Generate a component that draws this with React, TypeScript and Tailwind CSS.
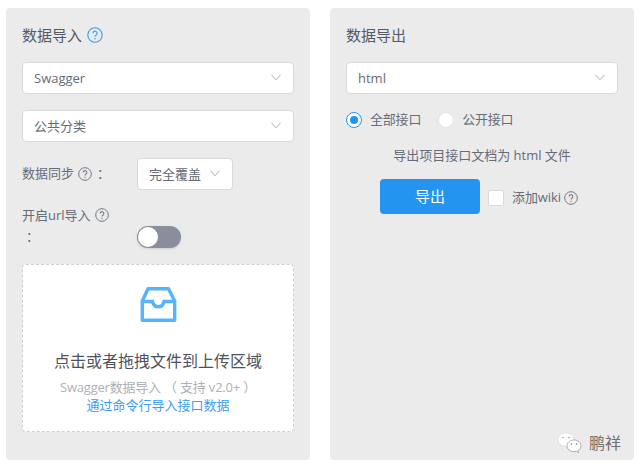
import React from 'react';

const FONT = "font-['Open_Sans','Noto_Sans_CJK_SC',sans-serif]";

const Chevron = () => (
  <svg width="10" height="7" viewBox="0 0 10 7" fill="none" className="shrink-0 mb-[2px]">
    <path d="M.5.8l4.500 5 4.500-5" stroke="#a9adb5" strokeWidth="1" />
  </svg>
);

const Help = ({ size = 14, color = '#6f7584' }: { size?: number; color?: string }) => (
  <svg width={size} height={size} viewBox="0 0 16 16" fill="none" className="shrink-0">
    <circle cx="8" cy="8" r="7.2" stroke={color} strokeWidth="1.1" />
    <path d="M5.900 6.300a2.100 2.100 0 1 1 3.300 1.700c-.8.500-1.200.9-1.200 1.800" stroke={color} strokeWidth="1.200" />
    <circle cx="8" cy="11.800" r=".8" fill={color} />
  </svg>
);

const Select = ({ label, className }: { label: string; className: string }) => (
  <div className={`h-8 bg-white border border-[#d9d9d9] rounded flex items-center justify-between pl-[11px] pr-[12px] text-[13px] text-[#666b78] ${className}`}>
    <span className="pt-[2px]">{label}</span>
    <Chevron />
  </div>
);

const Radio = ({ label, checked }: { label: string; checked?: boolean }) => (
  <div className="flex items-center gap-2 text-[13px] text-[#666b78]">
    <span className={`w-4 h-4 rounded-full bg-white border flex items-center justify-center ${checked ? 'border-[#2395f1]' : 'border-[#e4e4e4]'}`}>
      {checked && <span className="w-2 h-2 rounded-full bg-[#2395f1]" />}
    </span>
    <span className="tracking-[-0.2px]">{label}</span>
  </div>
);

const Inbox = () => (
  <svg width="37" height="37" viewBox="0 0 37 37" fill="none">
    <path d="M8 2.700h20.500L34.700 15v19.300H2.300V15z" stroke="#55b4ff" strokeWidth="3.400" strokeLinejoin="round" />
    <path d="M3 15.500h9.500c.8 3.500 3 5.300 5.800 5.300s5-1.800 5.800-5.300H34" stroke="#55b4ff" strokeWidth="3.400" />
  </svg>
);

const App: React.FC = () => {
  return (
    <div className={`relative w-[641px] h-[471px] bg-white flex gap-5 pl-[6px] pt-2 overflow-hidden ${FONT}`}>
      <div className="w-[304px] h-[452px] bg-[#ebebeb] rounded px-4 flex flex-col">
        <div className="flex items-center gap-[5px] mt-[16px] h-[22px] text-[15px] text-[#555a66]">
          <span>数据导入</span>
          <Help size={16} color="#3d9cf0" />
        </div>
        <Select label="Swagger" className="mt-4" />
        <Select label="公共分类" className="mt-4" />
        <div className="flex items-center mt-4 h-8 text-[13px] text-[#666b78]">
          <div className="w-[115px] flex items-center gap-[4px]">
            <span>数据同步</span>
            <Help />
            <span className="ml-[1px]">：</span>
          </div>
          <Select label="完全覆盖" className="w-[96px]" />
        </div>
        <div className="flex mt-[15px] h-[51px] text-[13px] text-[#666b78]">
          <div className="w-[115px] leading-[20px]">
            <div className="flex items-center gap-[4px]">
              <span>开启url导入</span>
              <Help />
            </div>
            <div className="pl-[4px] leading-[22px]">：</div>
          </div>
          <div className="mt-[21px] w-[44px] h-[22px] rounded-full bg-[#8a8e9c] p-[1px] shadow-sm">
            <div className="w-5 h-5 rounded-full bg-white" />
          </div>
        </div>
        <div className="mt-[8px] h-[168px] bg-white border border-dashed border-[#cfcfcf] rounded flex flex-col items-center">
          <div className="mt-[21px] h-[37px]">
            <Inbox />
          </div>
          <p className="mt-[26px] text-[16px] leading-[24px] text-[#4d525e]">点击或者拖拽文件到上传区域</p>
          <p className="mt-[4px] text-[13px] leading-[20px] tracking-[-0.2px] text-[#aeb1b8]">Swagger数据导入 （ 支持 v2.0+ ）</p>
          <p className="text-[13px] leading-[17px] text-[#3d9cf0]">通过命令行导入接口数据</p>
        </div>
      </div>

      <div className="w-[304px] h-[452px] bg-[#ebebeb] rounded px-4 flex flex-col">
        <div className="mt-[16px] h-[22px] text-[15px] text-[#555a66]">数据导出</div>
        <Select label="html" className="mt-4" />
        <div className="flex gap-[17px] mt-[16px] h-[20px]">
          <Radio label="全部接口" checked />
          <Radio label="公开接口" />
        </div>
        <p className="mt-[16px] h-[18px] leading-[18px] text-center text-[13px] text-[#666b78]">导出项目接口文档为 html 文件</p>
        <div className="flex items-start mt-[15px] ml-[34px]">
          <div className="w-[100px] h-[35px] rounded bg-[#2395f1] text-white text-[15px] flex items-center justify-center">导出</div>
          <div className="flex items-center h-4 mt-[11px]">
            <span className="ml-2 w-4 h-4 bg-white border border-[#d9d9d9] rounded-[2px]" />
            <span className="ml-2 text-[13px] text-[#666b78] tracking-[-0.1px]">添加wiki</span>
            <span className="ml-[3px]"><Help /></span>
          </div>
        </div>
      </div>

      <div className="absolute left-[557px] top-[432px] flex items-center gap-[7px]">
        <svg width="25" height="22" viewBox="0 0 25 22" fill="none">
          <path d="M9 1C4.500 1 1 4 1 7.600c0 2.100 1.200 3.900 3 5l-.7 2.200 2.600-1.300c1 .3 2 .5 3.100.5 4.500 0 8-3 8-6.400S13.500 1 9 1z" fill="#fff" stroke="#dcdcdc" strokeWidth=".6" />
          <path d="M17 8c-3.900 0-7 2.600-7 5.800s3.100 5.800 7 5.800c.8 0 1.600-.1 2.300-.3l2.200 1.200-.5-2c1.800-1.100 3-2.800 3-4.700C24 10.600 20.900 8 17 8z" fill="#fff" stroke="#8f8f8f" strokeWidth=".7" />
          <circle cx="6" cy="5.500" r=".8" fill="#8f8f8f" />
          <circle cx="12" cy="5.500" r=".8" fill="#8f8f8f" />
          <circle cx="14.500" cy="12" r=".8" fill="#777" />
          <circle cx="19.500" cy="12" r=".8" fill="#777" />
        </svg>
        <span className="text-[16px] leading-[22px] text-[#6f6f6f]">鹏祥</span>
      </div>
    </div>
  );
};

export default App;
